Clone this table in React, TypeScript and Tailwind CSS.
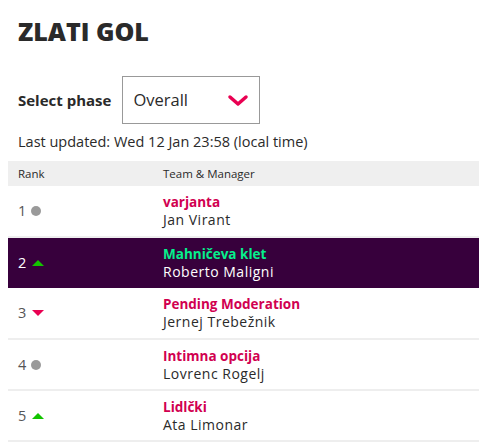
const rows = [
  { rank: 1, move: "same", team: "varjanta", manager: "Jan Virant" },
  { rank: 2, move: "up", team: "Mahničeva klet", manager: "Roberto Maligni", active: true },
  { rank: 3, move: "down", team: "Pending Moderation", manager: "Jernej Trebežnik" },
  { rank: 4, move: "same", team: "Intimna opcija", manager: "Lovrenc Rogelj" },
  { rank: 5, move: "up", team: "Lidlčki", manager: "Ata Limonar" },
];

function Movement({ move }: { move: string }) {
  if (move === "up") {
    return (
      <span className="ml-[6px] inline-block h-0 w-0 border-x-[6px] border-b-[6px] border-x-transparent border-b-[#13c400]" />
    );
  }
  if (move === "down") {
    return (
      <span className="ml-[6px] inline-block h-0 w-0 border-x-[6px] border-t-[6px] border-x-transparent border-t-[#e90052]" />
    );
  }
  return <span className="ml-[5px] inline-block h-[10px] w-[10px] rounded-full bg-[#9a9a9a]" />;
}

export default function App() {
  return (
    <div className="min-h-[446px] bg-white pl-[8px] text-[#37003c]" style={{ fontFamily: "'Open Sans', sans-serif" }}>
      <h1 className="pl-[10px] pt-[14px] text-[25px] font-extrabold leading-[34px] text-[#2a2a2a]">ZLATI GOL</h1>

      <div className="mt-[28px] flex items-center pl-[10px]">
        <span className="text-[15px] font-bold text-[#2a2a2a]">Select phase</span>
        <div className="ml-[11px] flex h-[48px] w-[138px] items-center justify-between border border-[#999] pl-[10px] pr-[10px]">
          <span className="text-[16.5px] text-[#2a2a2a]">Overall</span>
          <svg width="22" height="14" viewBox="0 0 22 14" className="mt-[1px]">
            <path d="M3 3 L11 10 L19 3" fill="none" stroke="#e90052" strokeWidth="3.5" strokeLinecap="round" strokeLinejoin="round" />
          </svg>
        </div>
      </div>

      <p className="mt-[9px] pl-[10px] text-[14.5px] leading-[18px] text-[#2a2a2a]">Last updated: Wed 12 Jan 23:58 (local time)</p>

      <table className="mt-[10px] w-full border-collapse text-left">
        <thead>
          <tr className="h-[25px] bg-[#efefef] text-[11.5px] text-[#2a2a2a]">
            <th className="w-[155px] pl-[10px] font-normal">Rank</th>
            <th className="font-normal">Team &amp; Manager</th>
          </tr>
        </thead>
        <tbody>
          {rows.map((r) => (
            <tr
              key={r.rank}
              className={r.active ? "h-[51px] bg-[#37003c]" : "h-[51px] border-b-2 border-[#eeeeee]"}
            >
              <td className="pl-[10px]">
                <div className={`flex items-center text-[14.5px] ${r.active ? "text-white" : "text-[#555]"}`}>
                  {r.rank}
                  <Movement move={r.move} />
                </div>
              </td>
              <td>
                <div className={`text-[13.5px] font-bold leading-[17px] ${r.active ? "text-[#05f08c]" : "text-[#d10050]"}`}>
                  {r.team}
                </div>
                <div className={`text-[14px] leading-[17px] tracking-[0.5px] ${r.active ? "text-white" : "text-[#2a2a2a]"}`}>{r.manager}</div>
              </td>
            </tr>
          ))}
        </tbody>
      </table>
    </div>
  );
}
